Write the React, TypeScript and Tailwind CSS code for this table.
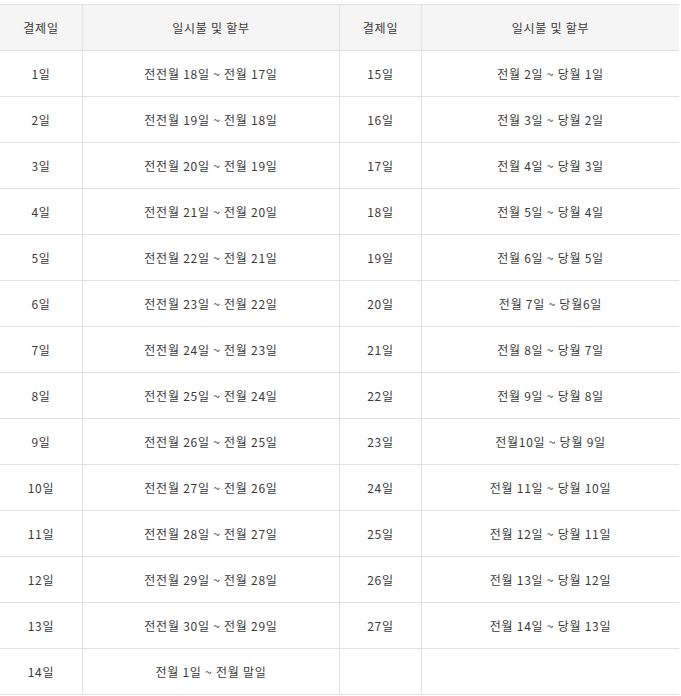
import React from "react";

const left: [string, string][] = [
  ["1일", "전전월 18일 ~ 전월 17일"],
  ["2일", "전전월 19일 ~ 전월 18일"],
  ["3일", "전전월 20일 ~ 전월 19일"],
  ["4일", "전전월 21일 ~ 전월 20일"],
  ["5일", "전전월 22일 ~ 전월 21일"],
  ["6일", "전전월 23일 ~ 전월 22일"],
  ["7일", "전전월 24일 ~ 전월 23일"],
  ["8일", "전전월 25일 ~ 전월 24일"],
  ["9일", "전전월 26일 ~ 전월 25일"],
  ["10일", "전전월 27일 ~ 전월 26일"],
  ["11일", "전전월 28일 ~ 전월 27일"],
  ["12일", "전전월 29일 ~ 전월 28일"],
  ["13일", "전전월 30일 ~ 전월 29일"],
  ["14일", "전월 1일 ~ 전월 말일"],
];

const right: [string, string][] = [
  ["15일", "전월 2일 ~ 당월 1일"],
  ["16일", "전월 3일 ~ 당월 2일"],
  ["17일", "전월 4일 ~ 당월 3일"],
  ["18일", "전월 5일 ~ 당월 4일"],
  ["19일", "전월 6일 ~ 당월 5일"],
  ["20일", "전월 7일 ~ 당월6일"],
  ["21일", "전월 8일 ~ 당월 7일"],
  ["22일", "전월 9일 ~ 당월 8일"],
  ["23일", "전월10일 ~ 당월 9일"],
  ["24일", "전월 11일 ~ 당월 10일"],
  ["25일", "전월 12일 ~ 당월 11일"],
  ["26일", "전월 13일 ~ 당월 12일"],
  ["27일", "전월 14일 ~ 당월 13일"],
  ["", ""],
];

const cell =
  "h-[46px] flex items-center justify-center border-b border-[#e1e1e1]";

export default function App() {
  const rows = left.map((l, i) => [l[0], l[1], right[i][0], right[i][1]]);
  return (
    <div
      className="w-[681px] bg-white pt-[4px] text-[12px] tracking-[0.75px] text-[#3a3a3a]"
      style={{ fontFamily: '"Noto Sans CJK KR", "Noto Sans", sans-serif' }}
    >
      <div className="w-[679px] grid grid-cols-[83px_257px_82px_257px] border-t border-[#e1e1e1]">
        <div className={`${cell} h-[46px] bg-[#f5f5f5] border-r`}>결제일</div>
        <div className={`${cell} h-[46px] bg-[#f5f5f5] border-r`}>일시불 및 할부</div>
        <div className={`${cell} h-[46px] bg-[#f5f5f5] border-r`}>결제일</div>
        <div className={`${cell} h-[46px] bg-[#f5f5f5]`}>일시불 및 할부</div>
        {rows.map((r, i) => (
          <React.Fragment key={i}>
            <div className={`${cell} border-r`}>{r[0]}</div>
            <div className={`${cell} border-r`}>{r[1]}</div>
            <div className={`${cell} border-r`}>{r[2]}</div>
            <div className={cell}>{r[3]}</div>
          </React.Fragment>
        ))}
      </div>
    </div>
  );
}
